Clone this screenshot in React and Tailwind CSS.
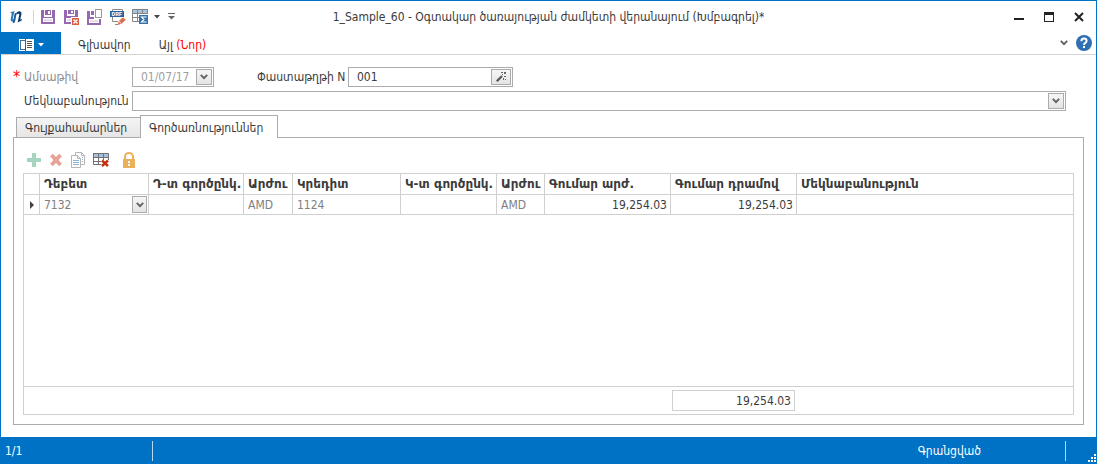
import { useState } from 'react'

const columns = [
  { key: 'debit', title: 'Դեբետ', width: 'w-[109px]' },
  { key: 'debitPartner', title: 'Դ-տ գործընկ.', width: 'w-[95px]' },
  { key: 'debitCurrency', title: 'Արժու', width: 'w-[49px]' },
  { key: 'credit', title: 'Կրեդիտ', width: 'w-[108px]' },
  { key: 'creditPartner', title: 'Կ-տ գործընկ.', width: 'w-[96px]' },
  { key: 'creditCurrency', title: 'Արժու', width: 'w-[48px]' },
  { key: 'amount', title: 'Գումար արժ.', width: 'w-[126px]', numeric: true },
  { key: 'amountAmd', title: 'Գումար դրամով', width: 'w-[126px]', numeric: true },
  { key: 'comment', title: 'Մեկնաբանություն', width: '' },
]

const rows = [
  {
    debit: '7132',
    debitCurrency: 'AMD',
    credit: '1124',
    creditCurrency: 'AMD',
    amount: '19,254.03',
    amountAmd: '19,254.03',
  },
]

const Logo = () => (
  <svg width="14" height="14" viewBox="0 0 14 14" aria-hidden="true">
    <path d="M1 2.5L5.5 1L3.8 8.4Q3.6 9.8 4.8 9.4L6.4 8.6L6 10.6Q4.6 12 3 11.6Q1.2 11 1.8 8.4L2.8 3.6Z" fill="#2a7ab8" />
    <path d="M5.6 3.6L7.8 2.6L5.8 12.6L3.8 13.2Z" fill="#1b5c98" />
    <path d="M7.4 4.6L7.8 2.4Q9.6 .6 11.4 1.4Q13 2.2 12.4 4.6L11.2 9.4L13 9L12.6 10.6L8.6 12.4L10.2 5Q10.6 3.4 9.2 3.8Z" fill="#0d3c70" />
  </svg>
)

const SaveIcon = () => (
  <svg width="15" height="16" viewBox="0 0 15 16" shapeRendering="crispEdges" aria-hidden="true">
    <path d="M0 1H3V8H11V1H14V15H0Z" fill="#9568b0" />
    <path d="M4 1H10V6H4Z" fill="#9568b0" />
    <path d="M7 2H9V5H7ZM2 9H12V13H2Z" fill="#fff" />
    <path d="M3 10H11V12H3Z" fill="#e6dcec" />
  </svg>
)

const SaveCloseIcon = () => (
  <svg width="15" height="16" viewBox="0 0 15 16" aria-hidden="true">
    <path d="M0 1H3V7H11V1H14V8H8V15H0Z" fill="#9568b0" />
    <path d="M4 1H10V5H4Z" fill="#9568b0" />
    <path d="M7 2H9V4H7ZM2 9H7V13H2Z" fill="#fff" />
    <path d="M3 10H7V12H3Z" fill="#e6dcec" />
    <path d="M7 8H15V16H7Z" fill="#fff" />
    <path d="M8 9H15V16H8Z" fill="#d9603f" />
    <path d="M9.5 10.5L13.5 14.5M13.5 10.5L9.5 14.5" stroke="#fff" strokeWidth="1.2" />
  </svg>
)

const SaveNewIcon = () => (
  <svg width="15" height="16" viewBox="0 0 15 16" shapeRendering="crispEdges" aria-hidden="true">
    <path d="M0 2H3V8H7V10H14V16H0Z" fill="#9568b0" />
    <path d="M4 2H7V6H4Z" fill="#9568b0" />
    <path d="M2 10H12V14H2Z" fill="#fff" />
    <path d="M3 11H11V13H3Z" fill="#e6dcec" />
    <path d="M7 0H15V10H7Z" fill="#fff" />
    <path d="M8.5 .5H14.5V8.5H8.5Z" fill="#fff" stroke="#999" />
  </svg>
)

const DraftIcon = () => (
  <svg width="18" height="16" viewBox="0 0 18 16" aria-hidden="true">
    <path d="M2.5 8V12.5H8M2.5 2V.5H12.5V2M5 15.5H8" fill="none" stroke="#8a8a8a" />
    <path d="M0 2H14V8H0Z" fill="#2464a4" />
    <text x="7" y="7" fontSize="6" fontWeight="bold" textAnchor="middle" fill="#fff" fontFamily="Liberation Mono, monospace">DRF</text>
    <path d="M7.6 16L8.8 12L13 8.2L15.8 10.8L11.6 14.8Z" fill="#d9704f" />
    <path d="M8.9 12.3L11.3 14.7" stroke="#fff" strokeWidth=".8" />
  </svg>
)

const TotalsIcon = () => (
  <svg width="16" height="16" viewBox="0 0 16 16" aria-hidden="true">
    <path d="M0 0H16V4H0Z" fill="#a9c3df" />
    <path d="M.5 .5H15.5V5M.5 .5V12.5H7M.5 4.5H15.5M.5 8.5H7M5.5 .5V12.5M10.5 .5V5" fill="none" stroke="#858585" />
    <path d="M7 6H16V15H7Z" fill="#3673ac" />
    <path d="M14 8.5V8H9.5L12 10.5L9.5 13H14V12.5" fill="none" stroke="#fff" strokeWidth="1.1" />
  </svg>
)

const AppMenuIcon = () => (
  <svg width="15" height="12" viewBox="0 0 15 12" shapeRendering="crispEdges" aria-hidden="true">
    <path d="M0 0H15V12H0Z" fill="#fff" />
    <path d="M1 1H6V11H1Z" fill="#3f6f96" />
    <path d="M2 2H6V10H2Z" fill="#fff" />
    <path d="M6 0H7V12H6Z" fill="#0072c6" />
    <path d="M8 2H13V3H8ZM8 4H13V5H8ZM8 6H13V7H8ZM8 8H13V9H8Z" fill="#555" />
  </svg>
)

const Caret = ({ className }) => (
  <svg width="6" height="4" viewBox="0 0 6 4" className={className} aria-hidden="true">
    <path d="M0 0H6L3 3.4Z" fill="currentColor" />
  </svg>
)

const Chevron = () => (
  <svg width="8" height="6" viewBox="0 0 8 6" aria-hidden="true">
    <path d="M.8 .8L4 4.2L7.2 .8" fill="none" stroke="#606060" strokeWidth="1.8" />
  </svg>
)

const WandIcon = () => (
  <svg width="10" height="10" viewBox="0 0 10 10" aria-hidden="true">
    <path d="M.8 9.2L6 4" stroke="#555" strokeWidth="2.2" />
    <path d="M5 0H7V1H5ZM8 0H10V2H8ZM6 2H7V3H6ZM8 4H10V5H8ZM7 6H8V8H7ZM9 7H10V8H9Z" fill="#666" />
  </svg>
)

const PlusIcon = () => (
  <svg width="14" height="14" viewBox="0 0 14 14" aria-hidden="true">
    <path d="M5 0H9V5H14V9H9V14H5V9H0V5H5Z" fill="#a6d4be" />
  </svg>
)

const CrossIcon = () => (
  <svg width="14" height="14" viewBox="0 0 14 14" aria-hidden="true">
    <path d="M2.5 2L11.5 12M11.5 2L2.5 12" stroke="#e5a497" strokeWidth="4" />
  </svg>
)

const CopyIcon = () => (
  <svg width="14" height="16" viewBox="0 0 14 16" aria-hidden="true">
    <path d="M4.5 3V.5H10.5L13.5 3.5V12.5H10" fill="none" stroke="#b5b5b5" />
    <path d="M.5 3.5H6.5L9.5 6.5V15.5H.5Z" fill="#fff" stroke="#b5b5b5" />
    <path d="M6.5 3.5V6.5H9.5M10.5 .5V3.5H13.5" fill="none" stroke="#b5b5b5" />
    <path d="M2 8.5H8M2 10.5H8M2 12.5H8M11 5.5H12M11 7.5H12M11 9.5H12" stroke="#8db4d4" />
  </svg>
)

const ClearTableIcon = () => (
  <svg width="16" height="15" viewBox="0 0 16 15" aria-hidden="true">
    <path d="M0 1H16V5H0Z" fill="#a4c1e2" />
    <path d="M.5 1.5H15.5V8M.5 1V12.5H8M.5 5.5H15.5M.5 9.5H8M5.5 1V12.5M10.5 1V8" fill="none" stroke="#707070" />
    <path d="M9 8.5L15 14M15 8.5L9 14" stroke="#c5300c" strokeWidth="2.4" />
  </svg>
)

const LockIcon = () => (
  <svg width="12" height="16" viewBox="0 0 12 16" aria-hidden="true">
    <path d="M2 7V4.5A4 3.5 0 0 1 10 4.5V7" fill="none" stroke="#ebb15a" strokeWidth="2" />
    <path d="M0 7H12V16H0Z" fill="#ebb15a" />
    <path d="M5 9H7V11H5ZM5 12H7V14H5Z" fill="#fff" />
  </svg>
)

const tools = [
  { label: 'Add', icon: <PlusIcon /> },
  { label: 'Delete', icon: <CrossIcon /> },
  { label: 'Copy', icon: <CopyIcon /> },
  { label: 'Clear', icon: <ClearTableIcon /> },
]

const dropButton = 'flex items-center justify-center border border-[#ababab] bg-linear-to-b from-[#f6f6f6] to-[#e4e4e4]'

const TitleBar = () => (
  <header className="relative flex h-[31px] items-center justify-between">
    <div className="flex items-center pl-2">
      <Logo />
      <span className="ml-[10px] h-[14px] w-px bg-[#d5d5d5]" />
      <div className="ml-[7px] flex items-center gap-2">
        <button type="button" aria-label="Save"><SaveIcon /></button>
        <button type="button" aria-label="Save and close"><SaveCloseIcon /></button>
        <button type="button" aria-label="Save and new"><SaveNewIcon /></button>
        <button type="button" aria-label="Draft"><DraftIcon /></button>
        <button type="button" aria-label="Totals" className="-ml-1 flex items-center">
          <TotalsIcon />
          <Caret className="ml-[6px] text-[#444]" />
        </button>
        <button type="button" aria-label="Customize" className="text-[#666]">
          <svg width="7" height="7" viewBox="0 0 7 7" aria-hidden="true">
            <path d="M0 .5H7" stroke="currentColor" />
            <path d="M0 3H7L3.5 6.5Z" fill="currentColor" />
          </svg>
        </button>
      </div>
    </div>
    <h1 className="pointer-events-none absolute inset-x-0 text-center">
      1_Sample_60 - Օգտակար ծառայության ժամկետի վերանայում (Խմբագրել)*
    </h1>
    <div className="flex items-center gap-5 pr-3 text-[#222]">
      <button type="button" aria-label="Minimize">
        <svg width="10" height="10" viewBox="0 0 10 10"><path d="M0 6H10V8H0Z" fill="currentColor" /></svg>
      </button>
      <button type="button" aria-label="Maximize">
        <svg width="10" height="10" viewBox="0 0 10 10"><path d="M0 0H10V10H0ZM1 3V9H9V3Z" fill="currentColor" fillRule="evenodd" /></svg>
      </button>
      <button type="button" aria-label="Close">
        <svg width="10" height="10" viewBox="0 0 10 10"><path d="M1 1L9 9M9 1L1 9" stroke="currentColor" strokeWidth="2" /></svg>
      </button>
    </div>
  </header>
)

const Ribbon = () => (
  <nav className="flex h-[23px] items-center border-b border-[#d4d4d4]">
    <button type="button" aria-label="Menu" className="flex h-full w-[60px] items-center justify-center gap-1 bg-[#0072c6] pt-1 text-white">
      <AppMenuIcon />
      <Caret />
    </button>
    <button type="button" className="ml-[17px] pt-1">Գլխավոր</button>
    <button type="button" className="ml-7 pt-1">Այլ <span className="text-[#f00]">(Նոր)</span></button>
    <button type="button" aria-label="Collapse" className="ml-auto"><Chevron /></button>
    <button type="button" aria-label="Help" className="mr-1 ml-2">
      <svg width="16" height="16" viewBox="0 0 16 16">
        <circle cx="8" cy="8" r="8" fill="#2f6fb3" />
        <path d="M5.4 6.2Q5.4 3.6 8 3.6T10.6 6Q10.6 7.2 9.2 8Q8 8.6 8 10" fill="none" stroke="#fff" strokeWidth="2" />
        <path d="M7 11H9V13H7Z" fill="#fff" />
      </svg>
    </button>
  </nav>
)

const DocumentForm = () => (
  <form className="space-y-1 px-3 pt-3" onSubmit={(e) => e.preventDefault()}>
    <div className="flex items-center">
      <label htmlFor="date" className="flex w-[119px] whitespace-nowrap text-[#8c8c8c]">
        <span className="w-[11px] text-[16px] leading-5 text-[#f00]">*</span>
        <span className="leading-5">Ամսաթիվ</span>
      </label>
      <div className="flex h-5 w-[82px] border border-[#ababab] p-px">
        <input id="date" disabled defaultValue="01/07/17" className="min-w-0 flex-1 bg-white pl-[7px] text-[#a0a0a0]" />
        <button type="button" disabled aria-label="Pick date" className={`${dropButton} w-4`}><Chevron /></button>
      </div>
      <label htmlFor="number" className="ml-[43px] w-[91px] whitespace-nowrap">Փաստաթղթի N</label>
      <div className="flex h-5 w-[165px] border border-[#ababab] p-px">
        <input id="number" defaultValue="001" className="min-w-0 flex-1 pl-[7px] outline-none" />
        <button type="button" aria-label="Generate number" className={`${dropButton} w-5`}><WandIcon /></button>
      </div>
    </div>
    <div className="flex items-center">
      <label htmlFor="comment" className="w-[119px] whitespace-nowrap pl-[11px]">Մեկնաբանություն</label>
      <div className="relative mr-[18px] h-5 flex-1 border border-[#ababab]">
        <select id="comment" className="block h-full w-full appearance-none pl-2 outline-none">
          <option></option>
        </select>
        <span className={`${dropButton} pointer-events-none absolute inset-y-px right-px w-4`}><Chevron /></span>
      </div>
    </div>
  </form>
)

const OperationsGrid = () => (
  <div className="flex flex-1 flex-col border border-[#d0d0d0]">
    <table className="w-full table-fixed border-separate border-spacing-0">
      <thead>
        <tr className="h-[21px]">
          <th className="w-4 border-r border-b border-[#d0d0d0]" />
          {columns.map((col) => (
            <th
              key={col.key}
              className={`${col.width} overflow-hidden border-r border-b border-[#d0d0d0] pl-1 text-left font-['DejaVu_Sans',sans-serif] font-bold whitespace-nowrap last:border-r-0`}
            >
              {col.title}
            </th>
          ))}
        </tr>
      </thead>
      <tbody>
        {rows.map((row) => (
          <tr key={row.debit} className="h-5 text-[#808080]">
            <td className="border-r border-b border-[#d0d0d0]">
              <svg width="4" height="8" viewBox="0 0 4 8" className="mx-auto" aria-hidden="true">
                <path d="M0 0L4 4L0 8Z" fill="#444" />
              </svg>
            </td>
            {columns.map((col) => (
              <td
                key={col.key}
                className={`border-r border-b border-[#d0d0d0] last:border-r-0 ${col.numeric ? 'pr-[3px] text-right text-[#3b3b3b]' : 'pl-1'}`}
              >
                {col.key === 'debit' ? (
                  <div className="relative h-[19px]">
                    <select aria-label={col.title} className="block h-full w-full appearance-none outline-none">
                      <option>{row.debit}</option>
                    </select>
                    <span className={`${dropButton} pointer-events-none absolute inset-y-px right-px w-[15px]`}><Chevron /></span>
                  </div>
                ) : (
                  row[col.key]
                )}
              </td>
            ))}
          </tr>
        ))}
      </tbody>
    </table>
    <div className="mt-auto flex border-t border-[#d0d0d0] py-[3px] pl-[648px]">
      <output className="h-[21px] w-[123px] border border-[#d0d0d0] pr-[3px] text-right leading-[21px]">19,254.03</output>
    </div>
  </div>
)

const StatusBar = () => (
  <footer className="relative flex h-[27px] items-center bg-[#0072c6] text-white">
    <span className="w-[151px] pl-1">1/1</span>
    <span className="h-5 w-px bg-[#b8d8f0]" />
    <span className="mr-[84px] ml-auto">Գրանցված</span>
    <span className="mr-[30px] h-5 w-px bg-[#b8d8f0]" />
    <svg width="8" height="8" viewBox="0 0 8 8" className="absolute right-0 bottom-[2px]" aria-hidden="true">
      <path d="M6 0H8V2H6ZM3 3H5V5H3ZM6 3H8V5H6ZM0 6H2V8H0ZM3 6H5V8H3ZM6 6H8V8H6Z" fill="#fff" />
    </svg>
  </footer>
)

const App = () => {
  const [tab, setTab] = useState('operations')

  const tabClass = (name) =>
    tab === name
      ? 'relative -mb-px h-[23px] border border-b-0 border-[#ababab] bg-white px-2 pt-[2px]'
      : 'h-5 border border-b-0 border-[#ababab] bg-linear-to-b from-[#f4f4f4] to-[#e6e6e6] px-2'

  return (
    <div className="flex min-h-screen flex-col border border-b-0 border-[#0072c6] bg-white font-['DejaVu_Sans_Condensed','DejaVu_Sans',sans-serif] text-[12px] leading-4 text-[#3b3b3b]">
      <TitleBar />
      <Ribbon />
      <DocumentForm />
      <main className="mx-3 mt-1 mb-3 flex flex-1 flex-col">
        <div className="flex items-end pl-[3px]" role="tablist">
          <button type="button" role="tab" aria-selected={tab === 'assets'} className={`${tabClass('assets')} w-[124px] border-r-0 text-left whitespace-nowrap`} onClick={() => setTab('assets')}>
            Գույքահամարներ
          </button>
          <button type="button" role="tab" aria-selected={tab === 'operations'} className={`${tabClass('operations')} w-[138px] text-left whitespace-nowrap`} onClick={() => setTab('operations')}>
            Գործառնություններ
          </button>
        </div>
        <section className="flex flex-1 flex-col border border-[#ababab] px-[9px] pb-[9px]">
          <div className="flex h-[35px] items-center gap-2 pt-2 pl-1">
            {tools.map((tool) => (
              <button key={tool.label} type="button" aria-label={tool.label}>{tool.icon}</button>
            ))}
            <button type="button" aria-label="Lock" className="ml-[6px]"><LockIcon /></button>
          </div>
          <OperationsGrid />
        </section>
      </main>
      <StatusBar />
    </div>
  )
}

export default App
